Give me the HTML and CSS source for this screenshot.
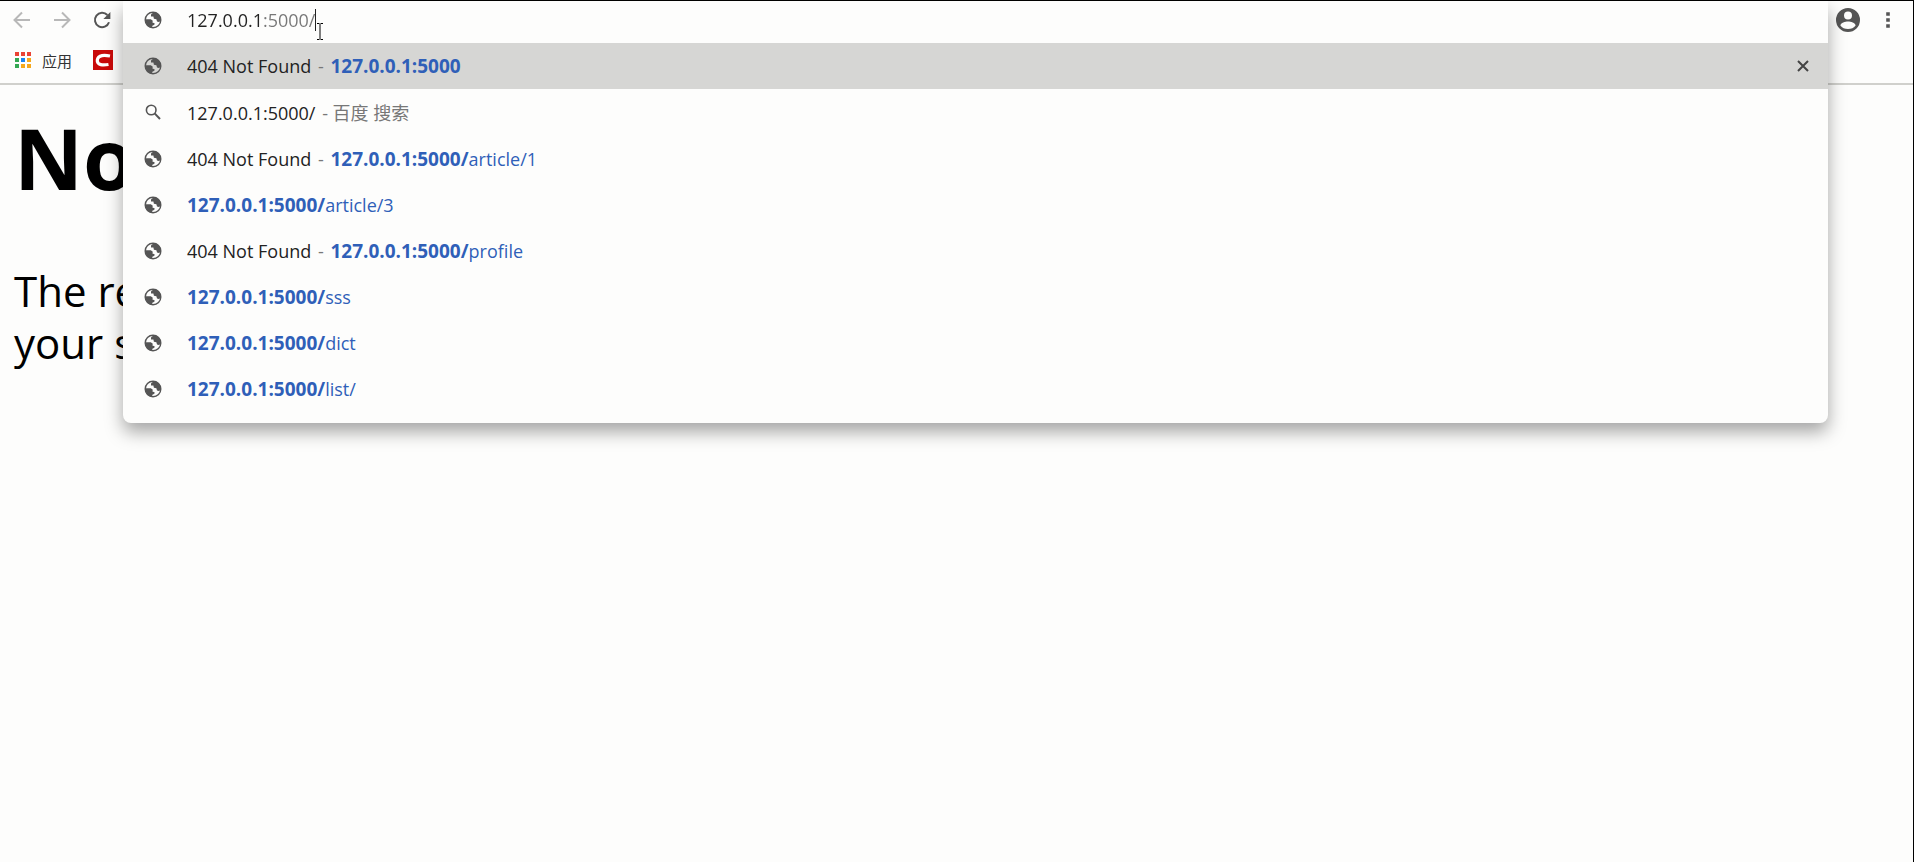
FILE: index.html
```html
<!DOCTYPE html>
<html lang="zh-CN">
<head>
    <meta charset="UTF-8">
    <meta name="viewport" content="width=device-width, initial-scale=1.0">
    <title>404 Not Found</title>
    <link rel="stylesheet" href="styles.css">
</head>
<body>
    <!-- icons shared by the rows -->
    <svg class="sprite" aria-hidden="true">
        <symbol id="globe" viewBox="0 0 18 18">
            <circle cx="9" cy="9" r="7.8" fill="none" stroke="currentColor" stroke-width="1.4"/>
            <path fill="currentColor" d="M9.600 1.200L7 3.400v2.200h2.400l.5 2.200 2.500.4.600 2.200 1.800.5 2-.9C17.500 5.500 14.500 1.600 9.600 1.200zM1.200 8.200h5.600l2 1.600-.4 1.600 2.200.8-.2 1.600-2 .9-.4 2C4.300 16.600 1.200 13 1.200 8.200z"/>
        </symbol>
        <symbol id="search" viewBox="0 0 18 18">
            <circle cx="7.200" cy="7" r="4.800" fill="none" stroke="currentColor" stroke-width="1.600"/>
            <path d="M10.600 10.400L16 16" stroke="currentColor" stroke-width="2"/>
        </symbol>
    </svg>

    <div class="window">
        <header class="toolbar">
            <nav class="nav">
                <button class="icon-btn" aria-label="后退" disabled>
                    <svg viewBox="0 0 18 18"><path d="M17 9H2M9 1.500L1.500 9 9 16.500"/></svg>
                </button>
                <button class="icon-btn" aria-label="前进" disabled>
                    <svg viewBox="0 0 18 18"><path d="M1 9h15M9 1.500L16.500 9 9 16.500"/></svg>
                </button>
                <button class="icon-btn" aria-label="重新加载">
                    <svg viewBox="0 0 18 18"><path d="M16 11.200A7.200 7.200 0 1 1 14.400 4"/><path class="solid" d="M17.400 1v7h-7z"/></svg>
                </button>
            </nav>
            <div class="actions">
                <button class="icon-btn profile" aria-label="用户">
                    <svg viewBox="0 0 24 24"><path class="solid" fill-rule="evenodd" d="M12 0a12 12 0 1 0 0 24 12 12 0 0 0 0-24zM12 3.500a4 4 0 1 1 0 8 4 4 0 0 1 0-8zM12 21c-3.200 0-6-1.300-7.600-3.600C4.600 14.800 9.200 13.400 12 13.400s7.400 1.400 7.600 4C18 19.700 15.200 21 12 21z"/></svg>
                </button>
                <button class="icon-btn" aria-label="菜单">
                    <svg viewBox="0 0 18 18"><path class="solid" d="M7.200 1.200h3.600v3.600H7.200zM7.200 7.200h3.600v3.600H7.200zM7.200 13.200h3.600v3.600H7.200z"/></svg>
                </button>
            </div>
        </header>

        <div class="bookmarks">
            <a class="bookmark" href="#">
                <svg class="apps" viewBox="0 0 18 18" aria-hidden="true">
                    <path fill="#ea4335" d="M1 1h4v4H1zM7 1h4v4H7zM13 1h4v4h-4z"/>
                    <path fill="#34a853" d="M1 7h4v4H1zM1 13h4v4H1z"/>
                    <path fill="#1a84f0" d="M7 7h4v4H7z"/>
                    <path fill="#f5a81c" d="M13 7h4v4h-4zM7 13h4v4H7zM13 13h4v4h-4z"/>
                </svg>
                应用
            </a>
            <a class="bookmark" href="#" aria-label="CSDN">
                <svg class="favicon" viewBox="0 0 20 20" aria-hidden="true">
                    <path fill="#c90a0a" d="M0 0h20v20H0z"/>
                    <path fill="none" stroke="#fff" stroke-width="3.200" d="M17 6C12 5 5 4.500 4.300 10c-.5 5.500 6 5.400 11.200 4.500"/>
                </svg>
            </a>
        </div>

        <main class="page">
            <h1>No</h1>
            <p>The re<br>your s</p>
        </main>

        <div class="omnibox">
            <div class="row address">
                <svg class="row-icon"><use href="#globe"/></svg>
                <input class="url" type="text" value="127.0.0.1:5000/" aria-label="地址栏">
                <span class="caret"></span>
                <svg class="pointer" viewBox="0 0 8 17" aria-hidden="true"><path d="M1 .500h2.500M4.500 .500H7M4 1v15M1 16.500h2.500M4.500 16.500H7"/></svg>
            </div>
            <ul class="suggestions">
                <li class="row selected">
                    <svg class="row-icon"><use href="#globe"/></svg>
                    <span class="text">404 Not Found <i>-</i> <a href="#"><b>127.0.0.1:5000</b></a></span>
                    <button class="remove" aria-label="移除">
                        <svg viewBox="0 0 12 12"><path d="M1 1l10 10M11 1L1 11"/></svg>
                    </button>
                </li>
                <li class="row query">
                    <svg class="row-icon"><use href="#search"/></svg>
                    <span class="text">127.0.0.1:5000/ <i>- 百度 搜索</i></span>
                </li>
                <li class="row">
                    <svg class="row-icon"><use href="#globe"/></svg>
                    <span class="text">404 Not Found <i>-</i> <a href="#"><b>127.0.0.1:5000/</b>article/1</a></span>
                </li>
                <li class="row">
                    <svg class="row-icon"><use href="#globe"/></svg>
                    <span class="text"><a href="#"><b>127.0.0.1:5000/</b>article/3</a></span>
                </li>
                <li class="row">
                    <svg class="row-icon"><use href="#globe"/></svg>
                    <span class="text">404 Not Found <i>-</i> <a href="#"><b>127.0.0.1:5000/</b>profile</a></span>
                </li>
                <li class="row">
                    <svg class="row-icon"><use href="#globe"/></svg>
                    <span class="text"><a href="#"><b>127.0.0.1:5000/</b>sss</a></span>
                </li>
                <li class="row">
                    <svg class="row-icon"><use href="#globe"/></svg>
                    <span class="text"><a href="#"><b>127.0.0.1:5000/</b>dict</a></span>
                </li>
                <li class="row">
                    <svg class="row-icon"><use href="#globe"/></svg>
                    <span class="text"><a href="#"><b>127.0.0.1:5000/</b>list/</a></span>
                </li>
            </ul>
        </div>
    </div>
</body>
</html>
```
FILE: styles.css
```css
* {
    margin: 0;
    padding: 0;
    box-sizing: border-box;
}

body {
    font-family: 'Open Sans', 'Noto Sans CJK SC', sans-serif;
    background: #fdfdfc;
    color: #222;
}

.sprite {
    display: none;
}

.window {
    position: relative;
    min-height: 100vh;
    border-top: 1px solid #000;
    border-right: 1px solid #000;
}

.toolbar {
    display: flex;
    justify-content: space-between;
    align-items: center;
    height: 38px;
    padding: 0 16px 0 13px;
}

.nav {
    display: flex;
    gap: 22px;
}

.actions {
    display: flex;
    align-items: center;
    gap: 19px;
}

.icon-btn {
    width: 18px;
    height: 18px;
    border: none;
    background: none;
    color: #555;
}

.icon-btn:disabled {
    color: #b8b8b8;
}

.icon-btn svg {
    display: block;
    width: 100%;
    height: 100%;
    fill: none;
    stroke: currentColor;
    stroke-width: 2;
}

.icon-btn .solid {
    fill: currentColor;
    stroke: none;
}

.profile {
    width: 24px;
    height: 24px;
}

.bookmarks {
    display: flex;
    align-items: center;
    gap: 21px;
    height: 46px;
    padding: 0 14px 2px;
    border-bottom: 2px solid #d0d0cc;
}

.bookmark {
    display: flex;
    align-items: center;
    gap: 10px;
    color: #333;
    font-size: 15px;
    text-decoration: none;
}

.apps {
    width: 18px;
    height: 18px;
}

.favicon {
    width: 20px;
    height: 20px;
}

.page {
    padding: 14px;
    color: #000;
    font-size: 42px;
    line-height: 52px;
}

.page h1 {
    font-size: 85px;
    line-height: 116px;
    margin-bottom: 50px;
}

/* address bar and its suggestions, over the page */
.omnibox {
    position: absolute;
    top: 0;
    left: 123px;
    right: 85px;
    padding-bottom: 11px;
    background: #fdfdfc;
    border-radius: 0 0 8px 8px;
    box-shadow: 0 9px 18px rgba(0, 0, 0, 0.35);
}

.row {
    display: flex;
    align-items: center;
    height: 46px;
    padding: 0 19px 0 21px;
    font-size: 18px;
    white-space: nowrap;
}

.address {
    height: 42px;
    padding-bottom: 4px;
}

.row-icon {
    width: 18px;
    height: 18px;
    margin-right: 25px;
    color: #555;
}

.url {
    field-sizing: content;
    border: none;
    outline: none;
    font: inherit;
    color: transparent;
    background: linear-gradient(to right, #222 75px, #777 75px);
    -webkit-background-clip: text;
    background-clip: text;
}

.caret {
    width: 1px;
    height: 22px;
    background: #222;
}

.pointer {
    position: absolute;
    top: 22px;
    left: 193px;
    width: 8px;
    height: 17px;
    fill: none;
    stroke: #000;
}

.suggestions {
    list-style: none;
}

.selected {
    background: #d6d6d4;
}

.query {
    margin-bottom: 1px;
}

.text {
    flex: 1;
}

.text i {
    margin: 0 2px;
    color: #777;
    font-style: normal;
}

.text a {
    color: #2f5fb8;
    text-decoration: none;
}

.text b {
    font-size: 19px;
}

.remove {
    width: 12px;
    height: 12px;
    border: none;
    background: none;
    color: #444;
}

.remove svg {
    display: block;
    fill: none;
    stroke: currentColor;
    stroke-width: 2;
}
```
